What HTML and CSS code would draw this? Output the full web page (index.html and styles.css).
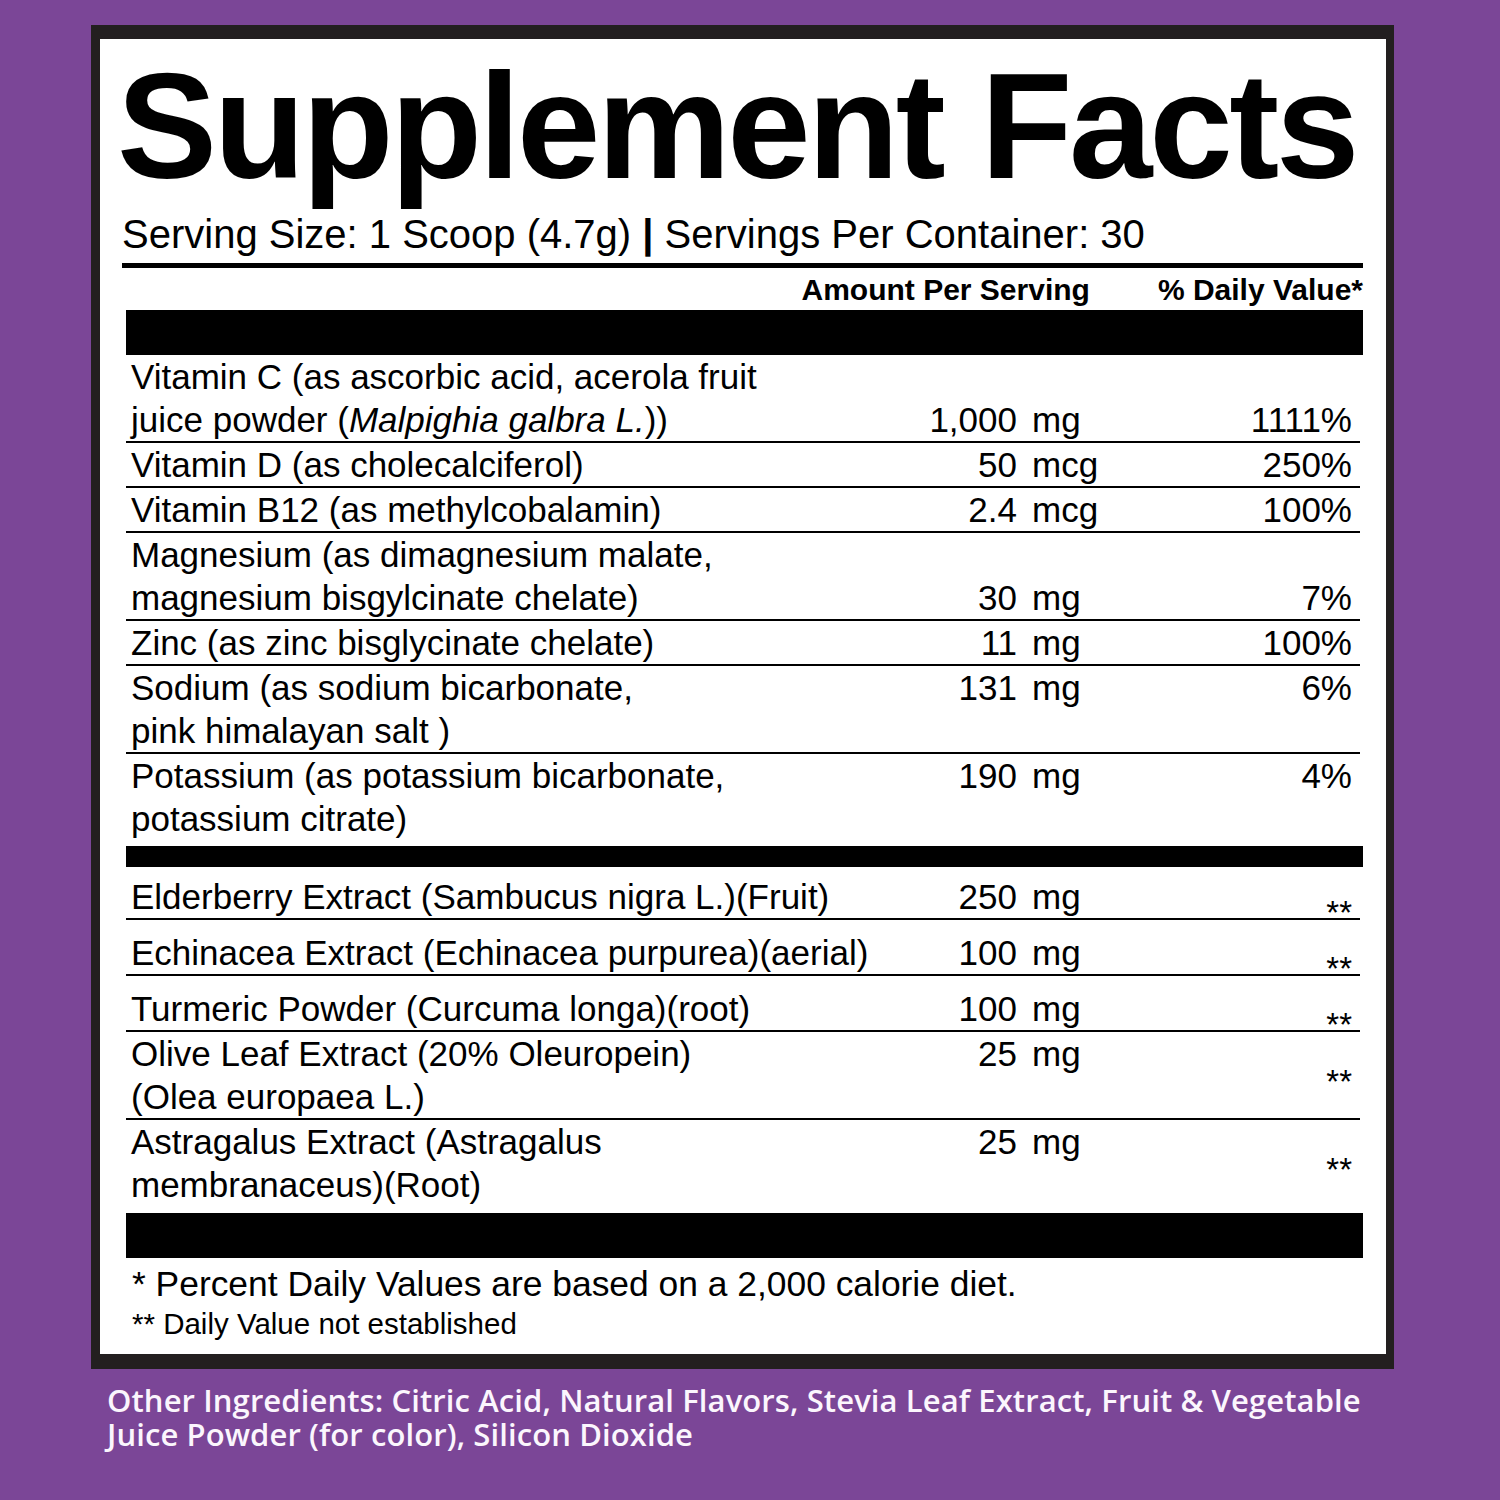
FILE: index.html
```html
<!DOCTYPE html>
<html>
<head>
<meta charset="utf-8">
<link rel="stylesheet" href="styles.css">
</head>
<body>
<div class="page">
  <div class="label">
    <h1 class="title">Supplement Facts</h1>
    <p class="serving">Serving Size: 1 Scoop (4.7g) <b>|</b> Servings Per Container: 30</p>
    <div class="rule"></div>
    <div class="table">
      <div class="head"><span>Amount Per Serving</span><span>% Daily Value*</span></div>
      <div class="bar bar-lg"></div>

      <div class="section">
        <div class="row r-end">
          <div class="name">Vitamin C (as ascorbic acid, acerola fruit<br>juice powder (<i>Malpighia galbra L.</i>))</div>
          <div class="qty">1,000</div><div class="unit">mg</div><div class="dv">1111%</div>
        </div>
        <div class="row">
          <div class="name">Vitamin D (as cholecalciferol)</div>
          <div class="qty">50</div><div class="unit">mcg</div><div class="dv">250%</div>
        </div>
        <div class="row">
          <div class="name">Vitamin B12 (as methylcobalamin)</div>
          <div class="qty">2.4</div><div class="unit">mcg</div><div class="dv">100%</div>
        </div>
        <div class="row r-end">
          <div class="name">Magnesium (as dimagnesium malate,<br>magnesium bisgylcinate chelate)</div>
          <div class="qty">30</div><div class="unit">mg</div><div class="dv">7%</div>
        </div>
        <div class="row">
          <div class="name">Zinc (as zinc bisglycinate chelate)</div>
          <div class="qty">11</div><div class="unit">mg</div><div class="dv">100%</div>
        </div>
        <div class="row">
          <div class="name">Sodium (as sodium bicarbonate,<br>pink himalayan salt )</div>
          <div class="qty">131</div><div class="unit">mg</div><div class="dv">6%</div>
        </div>
        <div class="row last">
          <div class="name">Potassium (as potassium bicarbonate,<br>potassium citrate)</div>
          <div class="qty">190</div><div class="unit">mg</div><div class="dv">4%</div>
        </div>
      </div>

      <div class="bar bar-sm"></div>

      <div class="section sec2">
        <div class="row single">
          <div class="name">Elderberry Extract (Sambucus nigra L.)(Fruit)</div>
          <div class="qty">250</div><div class="unit">mg</div><div class="dv na">**</div>
        </div>
        <div class="row single">
          <div class="name">Echinacea Extract (Echinacea purpurea)(aerial)</div>
          <div class="qty">100</div><div class="unit">mg</div><div class="dv na">**</div>
        </div>
        <div class="row single">
          <div class="name">Turmeric Powder (Curcuma longa)(root)</div>
          <div class="qty">100</div><div class="unit">mg</div><div class="dv na">**</div>
        </div>
        <div class="row">
          <div class="name">Olive Leaf Extract (20% Oleuropein)<br>(Olea europaea L.)</div>
          <div class="qty">25</div><div class="unit">mg</div><div class="dv na na-mid">**</div>
        </div>
        <div class="row last last-2">
          <div class="name">Astragalus Extract (Astragalus<br>membranaceus)(Root)</div>
          <div class="qty">25</div><div class="unit">mg</div><div class="dv na na-mid">**</div>
        </div>
      </div>

      <div class="bar bar-lg"></div>

      <div class="foot">
        <p class="f1">* Percent Daily Values are based on a 2,000 calorie diet.</p>
        <p class="f2">** Daily Value not established</p>
      </div>
    </div>
  </div>
  <div class="other">
    <p class="other-line">Other Ingredients: Citric Acid, Natural Flavors, Stevia Leaf Extract, Fruit &amp; Vegetable</p>
    <p class="other-line">Juice Powder (for color), Silicon Dioxide</p>
  </div>
</div>
</body>
</html>
```

FILE: styles.css
```css
html, body {
  margin: 0;
  padding: 0;
}

body {
  background: #7b4697;
  font-family: "Liberation Sans", Arial, sans-serif;
  color: #000;
}

.page {
  width: 1500px;
  height: 1500px;
  padding-top: 25px;
  box-sizing: border-box;
  overflow: hidden;
}

.label {
  margin-left: 91px;
  width: 1303px;
  box-sizing: border-box;
  background: #fff;
  border-style: solid;
  border-color: #231f20;
  border-width: 14px 8px 15px 9px;
  padding: 12px 23px 12px 22px;
}

.title {
  margin: 0 0 0 -5px;
  font-size: 150px;
  line-height: 150px;
  font-weight: 700;
  letter-spacing: -3.3px;
  white-space: nowrap;
}

.serving {
  margin: 9px 0 0;
  font-size: 40px;
  line-height: 48px;
  white-space: nowrap;
}

.serving b {
  font-weight: 700;
}

.rule {
  height: 5px;
  background: #000;
  margin-top: 5px;
}

.table {
  margin-left: 4px;
}

.head {
  display: flex;
  justify-content: flex-end;
  gap: 68px;
  font-size: 30px;
  line-height: 36px;
  font-weight: 700;
  padding-top: 4px;
  margin-bottom: 2px;
}

.bar {
  background: #000;
}

.bar-lg {
  height: 45px;
}

.bar-sm {
  height: 21px;
}

.row {
  display: grid;
  grid-template-columns: 1fr 130px 95px 240px;
  align-items: start;
  padding: 0 8px 0 5px;
  margin-right: 3px;
  font-size: 35px;
  line-height: 43px;
  border-bottom: 2px solid #000;
}

.row.r-end {
  align-items: end;
}

.row.last {
  border-bottom: 0;
  padding-bottom: 6px;
}

.row.last-2 {
  padding-bottom: 7px;
}

.name {
  white-space: nowrap;
}

.qty {
  text-align: right;
}

.unit {
  padding-left: 15px;
}

.dv {
  text-align: right;
}

.sec2 .row.single {
  align-items: end;
  padding-top: 11px;
}

.sec2 .row.single:first-child {
  padding-top: 8px;
}

.na {
  font-size: 33px;
  line-height: 0;
  align-self: end;
  padding-bottom: 5px;
}

.na.na-mid {
  align-self: center;
  padding-bottom: 0;
  padding-top: 14px;
}

.foot {
  padding-left: 6px;
  margin-top: 5px;
}

.foot p {
  margin: 0;
  white-space: nowrap;
}

.f1 {
  font-size: 35.4px;
  line-height: 43px;
}

.f2 {
  font-size: 29.5px;
  line-height: 36px;
  margin-top: 5px;
}

.other {
  margin: 16px 0 0 107px;
  color: #fbf6fd;
  font-family: "Open Sans", "Noto Sans", sans-serif;
  font-weight: 600;
  font-size: 31px;
  letter-spacing: 0.1px;
}

.other-line {
  margin: 0;
  height: 34px;
  line-height: 30px;
  white-space: nowrap;
}
```
